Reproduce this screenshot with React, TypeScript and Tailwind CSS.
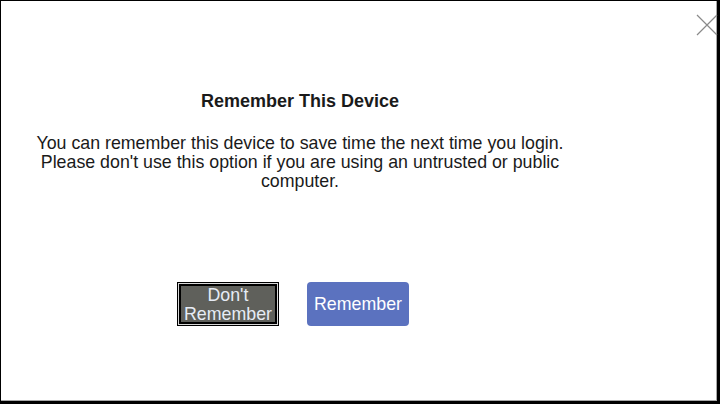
import React from "react";

export default function App() {
  return (
    <div className="w-[720px] h-[404px] bg-white relative overflow-hidden" style={{ fontFamily: '"Liberation Sans", Arial, sans-serif' }}>
      <div className="absolute inset-0 border-l border-t border-black border-r-[3px] border-b-[3px] border-r-black border-b-black" />
      <div className="absolute left-[1px] top-[1px] right-[3px] bottom-[3px] border-r border-b border-[#a8a8a8]" />
      <button className="absolute left-[696px] top-[14px] w-[22px] h-[22px] text-[#8a8a8a]" aria-label="Close">
        <svg width="22" height="22" viewBox="0 0 22 22" fill="none" stroke="currentColor" strokeWidth="1.2">
          <path d="M1 1 L21 21 M21 1 L1 21" />
        </svg>
      </button>
      <div className="w-[600px] flex flex-col items-center pt-[92px] text-[#1a1a1a]">
        <h1 className="text-[18px] leading-[19px] font-bold">Remember This Device</h1>
        <p className="mt-[23px] w-[560px] text-center text-[17.8px] leading-[19px]">
          You can remember this device to save time the next time you login. Please don't use this option if you are using an untrusted or public computer.
        </p>
        <div className="mt-[91px] flex gap-[28px] -ml-[14px]">
          <div className="border border-black bg-[#d8d8d8] p-[1px]">
            <button className="w-[98px] h-[40px] border-2 border-black bg-[#5f605b] text-[#e6ecf5] text-[17.8px] leading-[19px] flex items-center justify-center pt-[2px]">
              Don't<br />Remember
            </button>
          </div>
          <button className="w-[102px] h-[44px] rounded-[4px] bg-[#5b72bf] text-white text-[17.8px] leading-[19px]">
            Remember
          </button>
        </div>
      </div>
    </div>
  );
}
